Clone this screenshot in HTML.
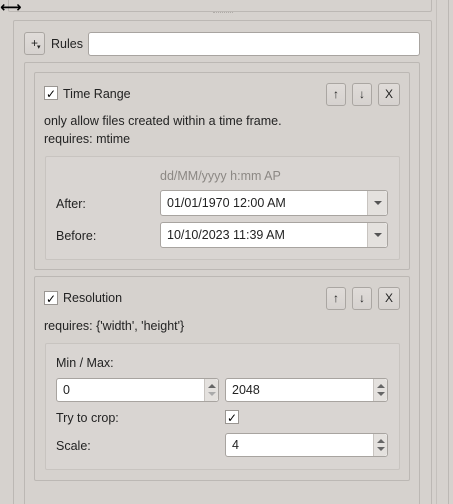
<!DOCTYPE html>
<html style="overflow:hidden;width:453px;height:504px"><head><style>
*{box-sizing:border-box;margin:0;padding:0}
body{width:453px;height:504px;background:#d6d2ce;position:relative;overflow:hidden;font-family:"Liberation Sans",sans-serif;font-size:12.5px;line-height:14px;color:#232323}
.a{position:absolute}
.fr{position:absolute;border:1px solid #bcb8b4;border-radius:2px}
.gb{position:absolute;border:1px solid #c8c4c0;background:#d9d5d2;border-radius:2px}
.btn{position:absolute;border:1px solid #aaa6a2;border-radius:3px;background:linear-gradient(#e0dcd9,#d6d2cf);text-align:center;font-size:12px;line-height:20px}
.inp{position:absolute;background:#fff;border:1px solid #a8a4a0;border-radius:3px;padding-left:6px;line-height:22px}
.cb{position:absolute;width:14px;height:14px;background:#fff;border:1px solid #9a9692;font-family:"DejaVu Sans",sans-serif;font-size:12px;line-height:14px;text-align:center;font-weight:bold;color:#000}
.dd{position:absolute;right:0;top:0;bottom:0;width:20px;border-left:1px solid #c8c4c0;background:#e4e1de;border-radius:0 3px 3px 0}
.dd:after{content:"";position:absolute;left:6px;top:10px;border-left:4px solid transparent;border-right:4px solid transparent;border-top:4px solid #555}
.sp{position:absolute;right:0;top:0;bottom:0;width:14px;border-left:1px solid #c8c4c0;background:#e4e1de;border-radius:0 3px 3px 0}
.sp:before{content:"";position:absolute;left:3px;top:5px;border-left:4px solid transparent;border-right:4px solid transparent;border-bottom:4px solid #666}
.sp:after{content:"";position:absolute;left:3px;top:13px;border-left:4px solid transparent;border-right:4px solid transparent;border-top:4px solid #666}
.sp.d:after{border-top-color:#aaa}
</style></head><body>
<div class="a" style="left:8px;top:-4px;width:424px;height:16px;border:1px solid #bcb8b4;border-top:none;border-radius:2px"></div>
<div class="a" style="left:0;top:1px;font-family:'DejaVu Sans',sans-serif;font-size:15px;line-height:12px;font-weight:bold;color:#000">⟷</div>
<div class="a" style="left:213px;top:12px;width:20px;border-top:1px dotted #b0aca8"></div>
<div class="a" style="left:436px;top:0;height:504px;border-left:1px solid #c4c0bc"></div>
<div class="a" style="left:448px;top:0;height:504px;border-left:1px solid #bcb8b4"></div>
<div class="fr" style="left:13px;top:20px;width:419px;height:500px"></div>
<div class="btn" style="left:24px;top:32px;width:21px;height:23px;line-height:21px">+<span style="position:absolute;left:12px;top:4px;font-size:7px">▾</span></div>
<div class="a" style="left:51px;top:37px">Rules</div>
<div class="inp" style="left:88px;top:32px;width:332px;height:24px"></div>
<div class="fr" style="left:24px;top:62px;width:396px;height:460px"></div>

<div class="fr" style="left:34px;top:72px;width:376px;height:198px"></div>
<div class="cb" style="left:44px;top:86px">✓</div>
<div class="a" style="left:63px;top:87px">Time Range</div>
<div class="btn" style="left:326px;top:83px;width:20px;height:23px">↑</div>
<div class="btn" style="left:352px;top:83px;width:20px;height:23px">↓</div>
<div class="btn" style="left:378px;top:83px;width:22px;height:23px">X</div>
<div class="a" style="left:44px;top:114px">only allow files created within a time frame.</div>
<div class="a" style="left:44px;top:132px">requires: mtime</div>
<div class="gb" style="left:45px;top:156px;width:355px;height:104px"></div>
<div class="a" style="left:160px;top:169px;color:#8c8884">dd/MM/yyyy h:mm AP</div>
<div class="a" style="left:56px;top:197px">After:</div>
<div class="inp" style="left:160px;top:190px;width:228px;height:26px;line-height:24px">01/01/1970 12:00 AM<div class="dd"></div></div>
<div class="a" style="left:56px;top:229px">Before:</div>
<div class="inp" style="left:160px;top:222px;width:228px;height:26px;line-height:24px">10/10/2023 11:39 AM<div class="dd"></div></div>

<div class="fr" style="left:34px;top:276px;width:376px;height:205px"></div>
<div class="cb" style="left:44px;top:291px">✓</div>
<div class="a" style="left:63px;top:291px">Resolution</div>
<div class="btn" style="left:326px;top:287px;width:20px;height:23px">↑</div>
<div class="btn" style="left:352px;top:287px;width:20px;height:23px">↓</div>
<div class="btn" style="left:378px;top:287px;width:22px;height:23px">X</div>
<div class="a" style="left:44px;top:319px">requires: {'width', 'height'}</div>
<div class="gb" style="left:45px;top:343px;width:355px;height:127px"></div>
<div class="a" style="left:56px;top:356px">Min / Max:</div>
<div class="inp" style="left:56px;top:378px;width:163px;height:24px">0<div class="sp d"></div></div>
<div class="inp" style="left:225px;top:378px;width:163px;height:24px">2048<div class="sp"></div></div>
<div class="a" style="left:56px;top:411px">Try to crop:</div>
<div class="cb" style="left:225px;top:410px">✓</div>
<div class="a" style="left:56px;top:439px">Scale:</div>
<div class="inp" style="left:225px;top:433px;width:163px;height:24px">4<div class="sp"></div></div>
</body></html>
